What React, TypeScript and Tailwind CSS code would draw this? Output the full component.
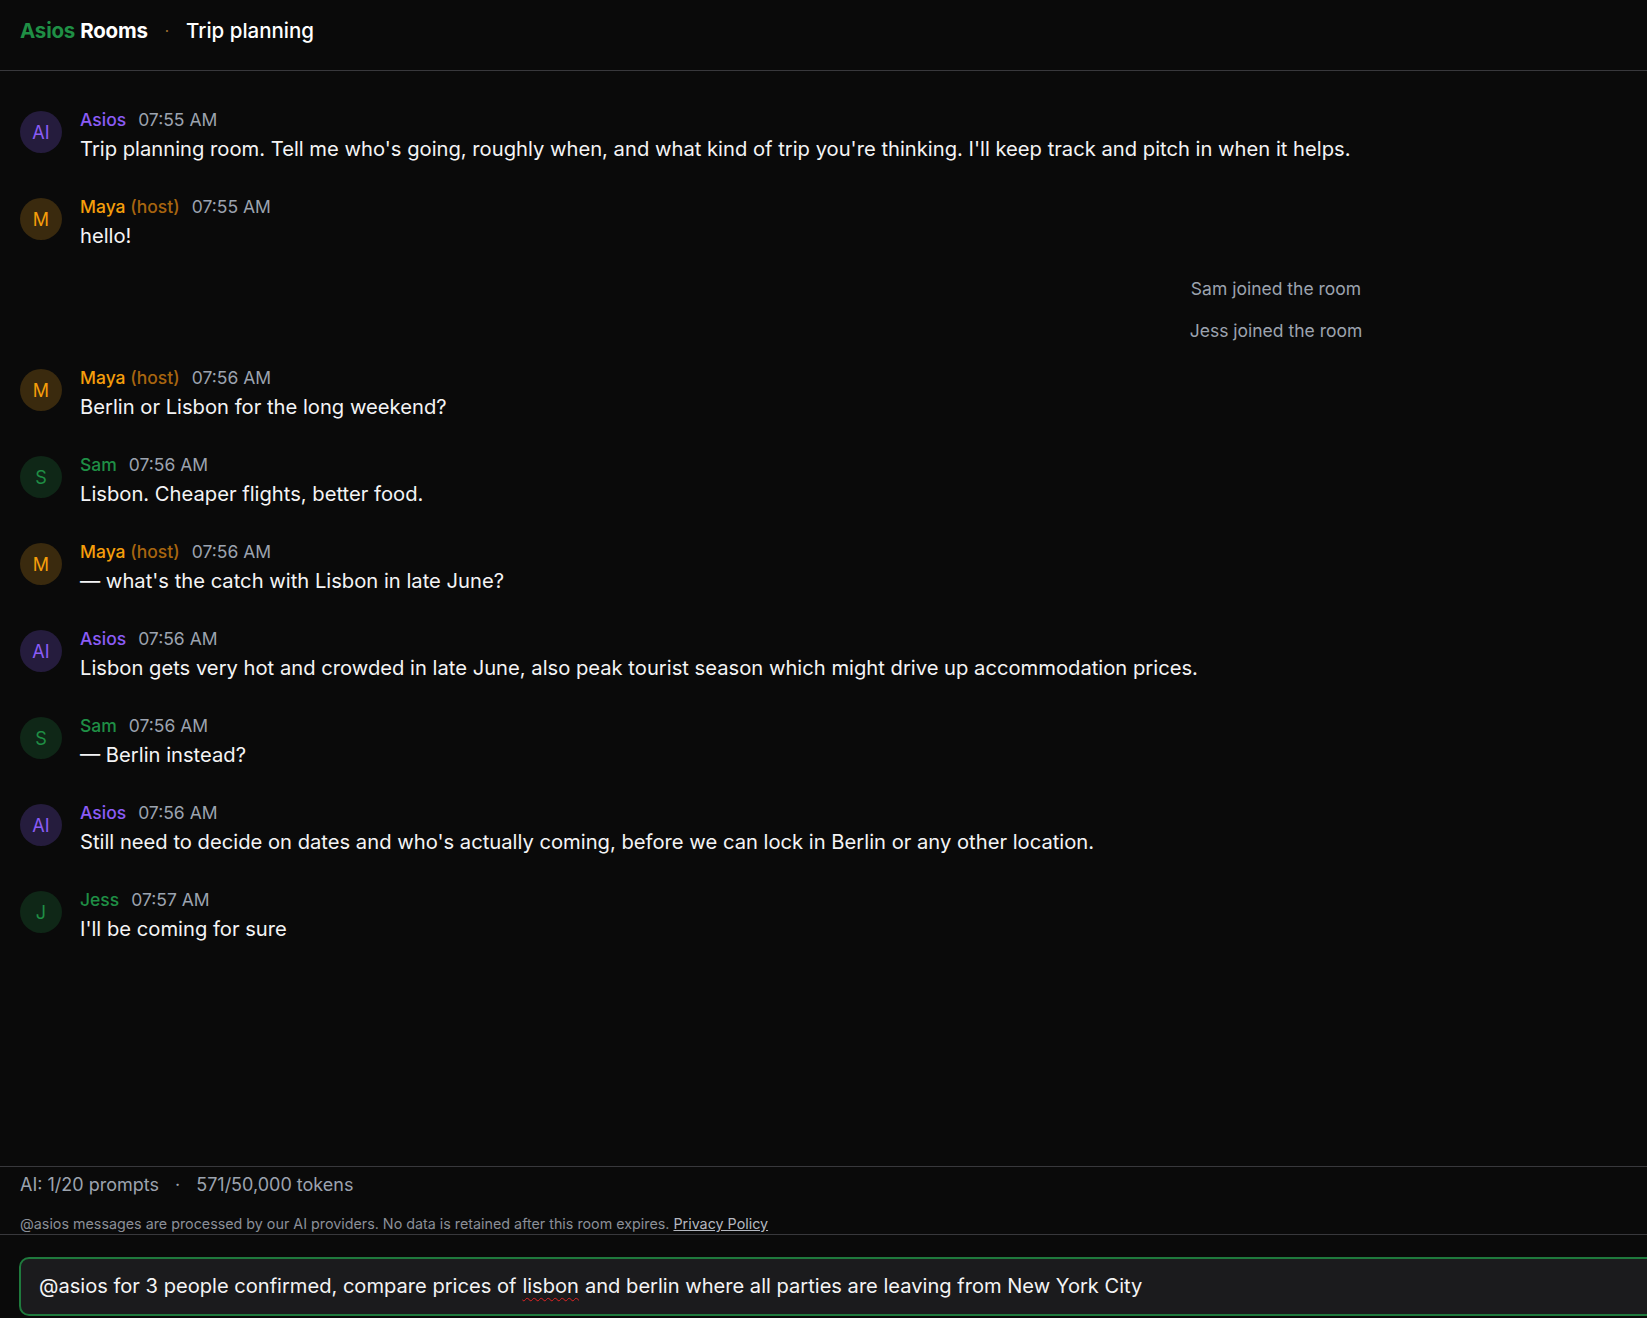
import React from "react";

type Msg =
  | { kind: "msg"; who: "ai" | "maya" | "sam" | "jess"; time: string; text: string }
  | { kind: "sys"; text: string };

const messages: Msg[] = [
  { kind: "msg", who: "ai", time: "07:55 AM", text: "Trip planning room. Tell me who's going, roughly when, and what kind of trip you're thinking. I'll keep track and pitch in when it helps." },
  { kind: "msg", who: "maya", time: "07:55 AM", text: "hello!" },
  { kind: "sys", text: "Sam joined the room" },
  { kind: "sys", text: "Jess joined the room" },
  { kind: "msg", who: "maya", time: "07:56 AM", text: "Berlin or Lisbon for the long weekend?" },
  { kind: "msg", who: "sam", time: "07:56 AM", text: "Lisbon. Cheaper flights, better food." },
  { kind: "msg", who: "maya", time: "07:56 AM", text: "— what's the catch with Lisbon in late June?" },
  { kind: "msg", who: "ai", time: "07:56 AM", text: "Lisbon gets very hot and crowded in late June, also peak tourist season which might drive up accommodation prices." },
  { kind: "msg", who: "sam", time: "07:56 AM", text: "— Berlin instead?" },
  { kind: "msg", who: "ai", time: "07:56 AM", text: "Still need to decide on dates and who's actually coming, before we can lock in Berlin or any other location." },
  { kind: "msg", who: "jess", time: "07:57 AM", text: "I'll be coming for sure" },
];

function Avatar({ who }: { who: string }) {
  if (who === "ai")
    return (
      <div className="mt-[3px] flex h-[42px] w-[42px] shrink-0 items-center justify-center rounded-full bg-[#251c3d] text-[18px] text-[#8b5cf6]">
        AI
      </div>
    );
  if (who === "maya")
    return (
      <div className="mt-[3px] flex h-[42px] w-[42px] shrink-0 items-center justify-center rounded-full bg-[#3a2a0e] text-[18px] text-[#f59e0b]">
        M
      </div>
    );
  if (who === "sam")
    return (
      <div className="mt-[3px] flex h-[42px] w-[42px] shrink-0 items-center justify-center rounded-full bg-[#0f2717] text-[18px] text-[#1f8f45]">
        S
      </div>
    );
  return (
    <div className="mt-[3px] flex h-[42px] w-[42px] shrink-0 items-center justify-center rounded-full bg-[#0f2717] text-[18px] text-[#1f8f45]">
      J
    </div>
  );
}

function Name({ who }: { who: string }) {
  if (who === "ai") return <span className="text-[#8b5cf6]">Asios</span>;
  if (who === "maya")
    return (
      <span className="text-[#f59e0b]">
        Maya <span className="text-[#a8650f]">(host)</span>
      </span>
    );
  if (who === "sam") return <span className="text-[#1f8f45]">Sam</span>;
  return <span className="text-[#1f8f45]">Jess</span>;
}

export default function App() {
  return (
    <div
      className="h-[1318px] w-screen overflow-hidden bg-[#0a0a0a] text-[#f4f4f5]"
      style={{ fontFamily: "Inter, 'Noto Sans', sans-serif" }}
    >
      <div className="flex h-full w-[2552px] flex-col">
        <header className="flex h-[71px] shrink-0 items-start border-b border-[#38383c] px-5 pt-[16px]">
          <div className="flex items-center text-[20.5px] leading-[30px]">
            <span className="font-bold tracking-[-0.01em] text-[#1f8f45]">Asios</span>
            <span className="ml-[5px] font-bold tracking-[-0.01em] text-white">Rooms</span>
            <span className="mx-[17px] text-[15px] text-[#a07030]">·</span>
            <span className="font-medium text-white">Trip planning</span>
          </div>
        </header>

        <main className="flex-1 pt-[23px]">
          {messages.map((m, i) =>
            m.kind === "sys" ? (
              <div key={i} className="flex justify-center py-[9px] text-[17.5px] leading-[24px] text-[#9ca3af]">
                {m.text}
              </div>
            ) : (
              <div key={i} className="flex items-start gap-[18px] px-5 pb-[17px] pt-[14px]">
                <Avatar who={m.who} />
                <div className="flex flex-col">
                  <div className="flex items-center gap-[12px] text-[17.5px] leading-[24px]">
                    <span className="font-medium">
                      <Name who={m.who} />
                    </span>
                    <span className="text-[#9ca3af]">{m.time}</span>
                  </div>
                  <div className="mt-[2px] text-[20.2px] leading-[30px] text-[#f4f4f5]">{m.text}</div>
                </div>
              </div>
            )
          )}
        </main>

        <footer className="shrink-0 border-t border-[#38383c]">
          <div className="flex items-center px-5 pt-[6px] text-[18px] leading-[24px] text-[#9ca3af]">
            <span>AI: 1/20 prompts</span>
            <span className="mx-[16px]">·</span>
            <span>571/50,000 tokens</span>
          </div>
          <div className="px-5 pt-[17px] text-[14.3px] leading-[20px] text-[#8b8f98]">
            @asios messages are processed by our AI providers. No data is retained after this room expires.{" "}
            <span className="text-[#b4b8c0] underline">Privacy Policy</span>
          </div>
        </footer>

        <div className="shrink-0 border-t border-[#38383c] pb-[2px] pl-[19px] pr-5 pt-[22px]">
          <div className="flex h-[59px] items-center rounded-[10px] border-2 border-[#1f7a3d] bg-[#1b1b1d] px-[18px] text-[20.1px] text-[#f4f4f5]">
            @asios for 3 people confirmed, compare prices of{" "}
            <span className="mx-[6px] underline decoration-wavy decoration-[#e02424] decoration-1 underline-offset-[4px]">lisbon</span>
            and berlin where all parties are leaving from New York City
          </div>
        </div>
      </div>
    </div>
  );
}
